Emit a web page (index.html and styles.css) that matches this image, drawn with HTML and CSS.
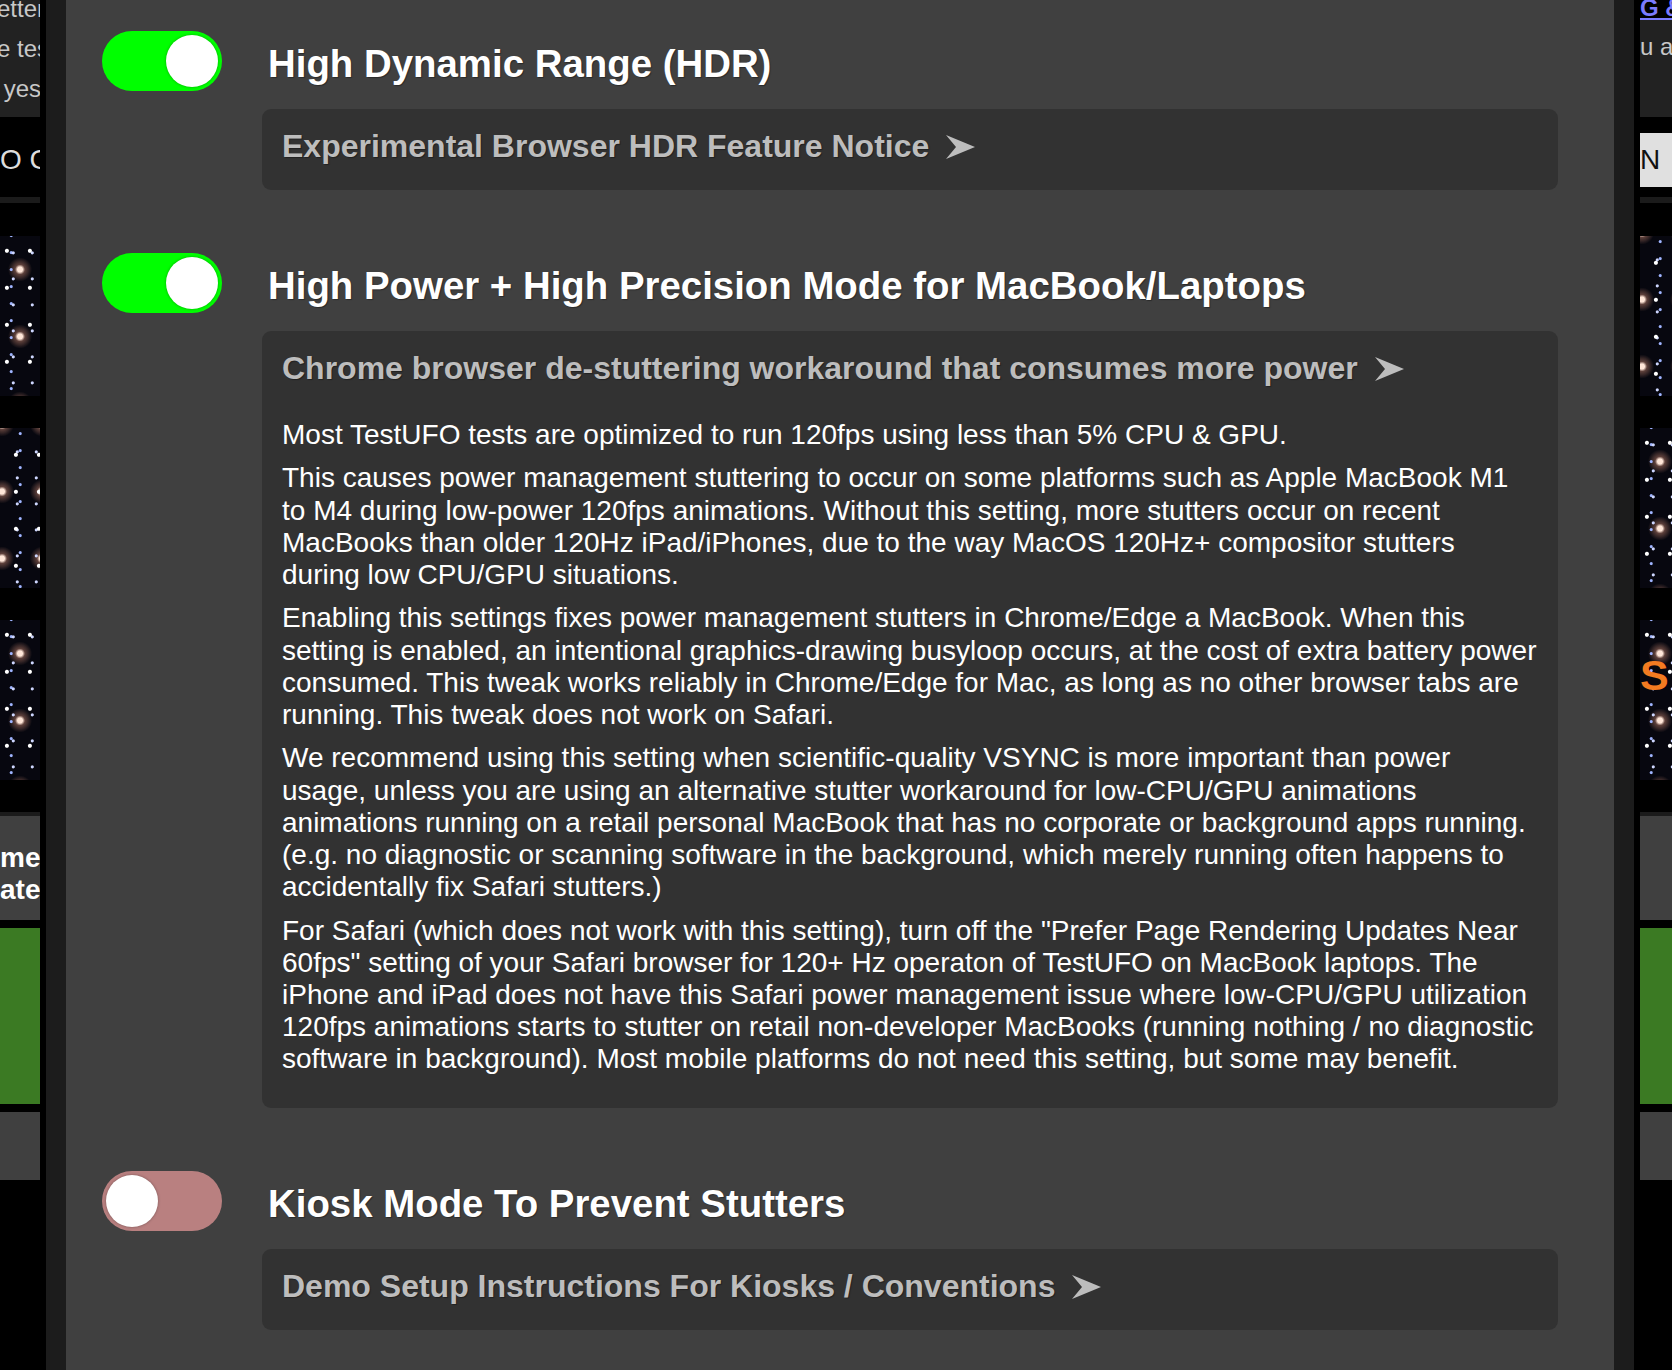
FILE: index.html
```html
<!DOCTYPE html>
<html lang="en">
<head>
    <meta charset="UTF-8">
    <title>TestUFO Settings</title>
    <meta name="viewport" content="width=device-width, initial-scale=1.0">
    <link rel="stylesheet" href="styles.css">
</head>
<body>
    <!-- page behind the settings dialog -->
    <div class="page">
        <aside class="page-side side-left">
            <div class="blurb">
                <p>etter</p>
                <p>e tes</p>
                <p>&nbsp;yes</p>
            </div>
            <div class="nav-row">O C</div>
            <div class="page-rule"></div>
            <div class="stars"></div>
            <div class="stars stars-alt"></div>
            <div class="stars"></div>
            <div class="promo">me<br>ate</div>
            <div class="go-box"></div>
            <div class="gray-box"></div>
        </aside>
        <aside class="page-side side-right">
            <a class="top-link">G &amp;</a>
            <div class="blurb blurb-right">
                <p>u a</p>
            </div>
            <div class="nav-row"><span class="nav-btn">N</span></div>
            <div class="page-rule"></div>
            <div class="stars stars-alt"></div>
            <div class="stars"></div>
            <div class="stars"><span class="tile-word">S</span></div>
            <div class="promo"></div>
            <div class="go-box"></div>
            <div class="gray-box"></div>
        </aside>
    </div>

    <div class="modal">
        <div class="modal-panel">

            <section class="setting">
                <div class="setting-head">
                    <span class="switch is-on"></span>
                    <h2>High Dynamic Range (HDR)</h2>
                </div>
                <details class="info">
                    <summary>Experimental Browser HDR Feature Notice <svg class="arrow" viewBox="0 0 29 24"><path d="M0 0 L29 12 L0 24 L10 12 Z"/></svg></summary>
                </details>
            </section>

            <section class="setting">
                <div class="setting-head">
                    <span class="switch is-on"></span>
                    <h2>High Power + High Precision Mode for MacBook/Laptops</h2>
                </div>
                <details class="info" open>
                    <summary>Chrome browser de-stuttering workaround that consumes more power <svg class="arrow" viewBox="0 0 29 24"><path d="M0 0 L29 12 L0 24 L10 12 Z"/></svg></summary>
                    <div class="info-body">
                        <p>Most TestUFO tests are optimized to run 120fps using less than 5% CPU &amp; GPU.</p>
                        <p>This causes power management stuttering to occur on some platforms such as Apple MacBook M1 to M4 during low-power 120fps animations. Without this setting, more stutters occur on recent MacBooks than older 120Hz iPad/iPhones, due to the way MacOS 120Hz+ compositor stutters during low CPU/GPU situations.</p>
                        <p>Enabling this settings fixes power management stutters in Chrome/Edge a MacBook. When this setting is enabled, an intentional graphics-drawing busyloop occurs, at the cost of extra battery power consumed. This tweak works reliably in Chrome/Edge for Mac, as long as no other browser tabs are running. This tweak does not work on Safari.</p>
                        <p>We recommend using this setting when scientific-quality VSYNC is more important than power usage, unless you are using an alternative stutter workaround for low-CPU/GPU animations animations running on a retail personal MacBook that has no corporate or background apps running. (e.g. no diagnostic or scanning software in the background, which merely running often happens to accidentally fix Safari stutters.)</p>
                        <p>For Safari (which does not work with this setting), turn off the "Prefer Page Rendering Updates Near 60fps" setting of your Safari browser for 120+ Hz operaton of TestUFO on MacBook laptops. The iPhone and iPad does not have this Safari power management issue where low-CPU/GPU utilization 120fps animations starts to stutter on retail non-developer MacBooks (running nothing / no diagnostic software in background). Most mobile platforms do not need this setting, but some may benefit.</p>
                    </div>
                </details>
            </section>

            <section class="setting">
                <div class="setting-head">
                    <span class="switch"></span>
                    <h2>Kiosk Mode To Prevent Stutters</h2>
                </div>
                <details class="info">
                    <summary>Demo Setup Instructions For Kiosks / Conventions <svg class="arrow" viewBox="0 0 29 24"><path d="M0 0 L29 12 L0 24 L10 12 Z"/></svg></summary>
                </details>
            </section>

        </div>
    </div>
</body>
</html>
```

FILE: styles.css
```css
* {
    box-sizing: border-box;
}

body {
    margin: 0;
    height: 1370px;
    overflow: hidden;
    position: relative;
    background: #000;
    font-family: "Liberation Sans", Arial, Helvetica, sans-serif;
}

/* ---------- page behind the dialog ---------- */

.page {
    display: flex;
    justify-content: space-between;
}

.page-side {
    overflow: hidden;
    white-space: nowrap;
    height: 1370px;
}

.side-left {
    width: 40px;
}

.side-right {
    width: 32px;
}

.blurb {
    background: #222;
    color: #c8c8c8;
    font-size: 24px;
    line-height: 40px;
    margin-top: -11.5px;
    padding-bottom: 8.5px;
}

.blurb p {
    margin: 0;
}

.side-left .blurb p {
    margin-left: -3px;
}

.blurb-right {
    margin-top: 0;
    padding: 7px 0 50px;
}

.top-link {
    display: block;
    height: 20px;
    line-height: 16px;
    font-size: 24px;
    font-weight: bold;
    color: #7b7bff;
    text-decoration: underline;
}

.nav-row {
    height: 80px;
    line-height: 86px;
    font-size: 28px;
    color: #ddd;
}

.side-right .nav-row {
    padding-top: 16px;
}

.nav-btn {
    display: block;
    height: 54px;
    line-height: 54px;
    background: #e0e0e0;
    color: #111;
}

.page-rule {
    height: 6px;
    background: #1b1b1b;
    margin-bottom: 33px;
}

.stars {
    height: 160px;
    margin-bottom: 32px;
    background:
        radial-gradient(circle at 30% 40%, #fff 0 1.5px, transparent 2.5px) 0 0 / 23px 37px,
        radial-gradient(circle at 70% 65%, #cdd6ff 0 1px, transparent 2px) 0 0 / 19px 26px,
        radial-gradient(circle at 20% 80%, #9fb4ff 0 1px, transparent 2px) 5px 3px / 31px 17px,
        radial-gradient(circle at 50% 50%, #ffe6d8 0 2.5px, rgba(255, 170, 140, 0.35) 5px, transparent 12px) 0 0 / 40px 67px,
        #07070f;
}

.stars-alt {
    background-position: 9px 12px, 4px 7px, 14px 9px, 22px 30px, 0 0;
}

.tile-word {
    display: block;
    padding-top: 34px;
    font-size: 43px;
    line-height: 43px;
    font-weight: bold;
    color: #f37b21;
}

.promo {
    height: 108px;
    border-top: 4px solid #1b1b1b;
    background: #404040;
    color: #fff;
    font-size: 28px;
    font-weight: bold;
    line-height: 32px;
    text-align: right;
    padding: 26px 4px 0 0;
}

.go-box {
    margin-top: 8px;
    height: 176px;
    background: #3b7a23;
}

.gray-box {
    margin-top: 8px;
    height: 68px;
    background: #404040;
}

/* ---------- settings dialog ---------- */

.modal {
    position: absolute;
    top: 0;
    bottom: 0;
    left: 40px;
    right: 32px;
    border-left: 6px solid #000;
    border-right: 6px solid #000;
    padding: 0 20px;
    background: rgba(30, 30, 30, 0.93);
}

.modal-panel {
    height: 100%;
    background: #404040;
    padding: 31px 56px 0 36px;
}

.setting + .setting {
    margin-top: 63px;
}

.setting-head {
    display: flex;
    align-items: center;
    gap: 46px;
}

.setting-head h2 {
    margin: 6px 0 0;
    font-size: 38.4px;
    font-weight: bold;
    color: #fff;
    text-shadow: 1px 1px 1px rgba(0, 0, 0, 0.35);
}

.switch {
    flex: none;
    position: relative;
    width: 120px;
    height: 60px;
    border-radius: 30px;
    background: #b98080;
    cursor: pointer;
}

.switch::after {
    content: "";
    position: absolute;
    top: 4px;
    left: 4px;
    width: 52px;
    height: 52px;
    border-radius: 50%;
    background: #fff;
    box-shadow: 0 0 3px rgba(0, 0, 0, 0.35);
}

.switch.is-on {
    background: #00ff00;
}

.switch.is-on::after {
    left: 64px;
}

.info {
    margin: 18px 0 0 160px;
    background: #323232;
    border-radius: 9px;
    padding: 19px 20px 25px;
}

.info summary {
    display: block;
    list-style: none;
    font-size: 32px;
    font-weight: bold;
    color: #bdbdbd;
    cursor: pointer;
    text-shadow: 1px 1px 1px rgba(0, 0, 0, 0.35);
}

.arrow {
    width: 29px;
    height: 24px;
    margin-left: 8px;
    vertical-align: -2px;
    fill: #bdbdbd;
}

.info-body {
    padding: 32px 0 7px;
}

.info-body p {
    margin: 0 0 11.2px;
    font-size: 28px;
    line-height: 32.2px;
    color: #fff;
}

.info-body p:last-child {
    margin-bottom: 0;
}
```
